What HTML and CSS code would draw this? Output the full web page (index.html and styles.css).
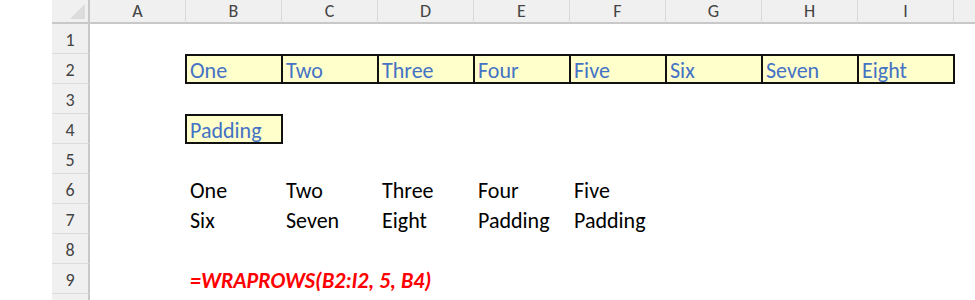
FILE: index.html
```html
<!DOCTYPE html>
<html>
<head>
<meta charset="utf-8">
<link rel="stylesheet" href="styles.css">
</head>
<body>
<div class="sheet">
  <div class="corner"><span class="tri"></span></div>
  <div class="ch">A</div><div class="ch">B</div><div class="ch">C</div><div class="ch">D</div><div class="ch">E</div><div class="ch">F</div><div class="ch">G</div><div class="ch">H</div><div class="ch">I</div><div class="ch rest"></div>

  <div class="rh">1</div><div class="row"></div>

  <div class="rh">2</div>
  <div class="row">
    <div class="cell"></div>
    <div class="strip">
      <div class="y">One</div><div class="y">Two</div><div class="y">Three</div><div class="y">Four</div><div class="y">Five</div><div class="y">Six</div><div class="y">Seven</div><div class="y">Eight</div>
    </div>
  </div>

  <div class="rh">3</div><div class="row"></div>

  <div class="rh">4</div>
  <div class="row">
    <div class="cell"></div>
    <div class="strip"><div class="y">Padding</div></div>
  </div>

  <div class="rh">5</div><div class="row"></div>

  <div class="rh">6</div>
  <div class="row">
    <div class="cell"></div>
    <div class="cell t">One</div><div class="cell t">Two</div><div class="cell t">Three</div><div class="cell t">Four</div><div class="cell t">Five</div>
  </div>

  <div class="rh">7</div>
  <div class="row">
    <div class="cell"></div>
    <div class="cell t">Six</div><div class="cell t">Seven</div><div class="cell t">Eight</div><div class="cell t">Padding</div><div class="cell t">Padding</div>
  </div>

  <div class="rh">8</div><div class="row"></div>

  <div class="rh">9</div>
  <div class="row">
    <div class="cell"></div>
    <div class="cell t formula">=WRAPROWS(B2:I2, 5, B4)</div>
  </div>

  <div class="rh last"></div><div class="row"></div>
</div>
</body>
</html>
```
FILE: styles.css
```css
html, body {
  margin: 0;
  padding: 0;
  background: #ffffff;
  overflow: hidden;
}
body {
  font-family: Calibri, Carlito, "Open Sans", sans-serif;
}
.sheet {
  margin-left: 52px;
  display: grid;
  grid-template-columns: 38px repeat(9, 96px) 1fr;
  grid-template-rows: 24px repeat(9, 30px) 6px;
  width: 923px;
}
.corner {
  background: #f0f0f0;
  border-right: 2px solid #c8c8c8;
  border-bottom: 2px solid #c8c8c8;
  box-sizing: border-box;
  position: relative;
}
.tri {
  position: absolute;
  right: 3px;
  bottom: 3px;
  width: 0;
  height: 0;
  border-left: 15px solid transparent;
  border-bottom: 15px solid #dcdcdc;
}
.ch {
  background: #f0f0f0;
  border-right: 1px solid #d9d9d9;
  border-bottom: 2px solid #c8c8c8;
  box-sizing: border-box;
  color: #444444;
  font-size: 18px;
  display: flex;
  align-items: center;
  justify-content: center;
}
.ch.rest { border-right: none; }
.rh {
  background: #f0f0f0;
  border-right: 2px solid #c8c8c8;
  border-bottom: 1px solid #dcdcdc;
  box-sizing: border-box;
  color: #444444;
  font-size: 18px;
  display: flex;
  align-items: center;
  justify-content: center;
  padding-top: 2px;
}
.rh.last {
  border-bottom: none;
  padding-top: 0;
}
.row {
  grid-column: 2 / -1;
  display: flex;
  align-items: stretch;
}
.cell {
  width: 96px;
  flex: none;
  display: flex;
  align-items: center;
  box-sizing: border-box;
}
.t {
  padding-left: 4px;
  padding-top: 2px;
  font-size: 22px;
  color: #000000;
  white-space: nowrap;
}
.strip {
  display: flex;
  border: 2px solid #111111;
  border-right-width: 0;
  box-sizing: border-box;
  margin-left: -1px;
}
.y {
  width: 96px;
  box-sizing: border-box;
  border-right: 2px solid #111111;
  background: #ffffcc;
  color: #4472c4;
  font-size: 22px;
  padding-left: 3px;
  padding-top: 2px;
  display: flex;
  align-items: center;
  white-space: nowrap;
}
.formula {
  color: #ff0000;
  font-weight: bold;
  font-style: italic;
  overflow: visible;
}
```
